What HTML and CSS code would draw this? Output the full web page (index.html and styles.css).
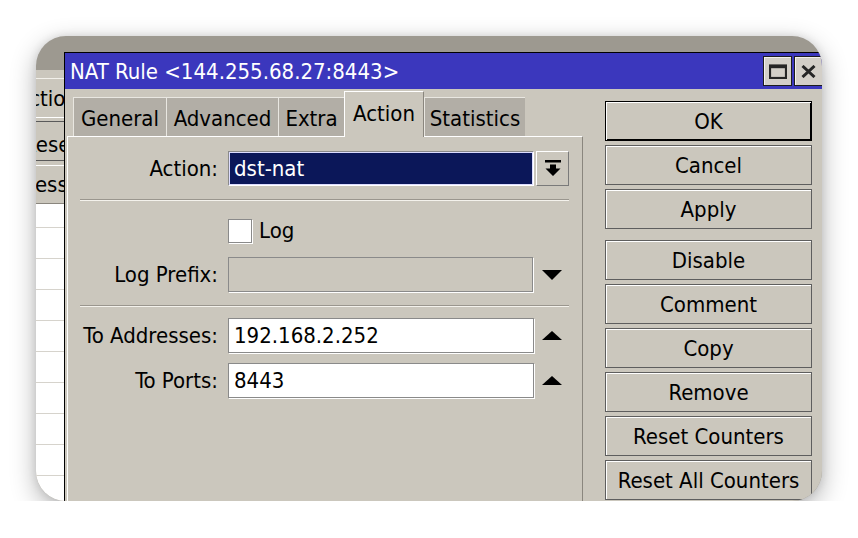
FILE: index.html
```html
<!DOCTYPE html>
<html>
<head>
<meta charset="utf-8">
<title>NAT Rule</title>
<link rel="stylesheet" href="styles.css">
</head>
<body>
<div class="stage">
  <div class="card">
    <div class="bgwin">
      <div class="bg-toolbar"></div>
      <div class="bg-row bg-row--tool"><span class="bg-text bg-text--action">Action</span></div>
      <div class="bg-row bg-row--btn"><span class="bg-text bg-text--reset">Reset</span></div>
      <div class="bg-row bg-row--head"><span class="bg-text bg-text--addr">Address</span></div>
      <div class="bg-list">
        <div class="bg-item"></div><div class="bg-item"></div><div class="bg-item"></div>
        <div class="bg-item"></div><div class="bg-item"></div><div class="bg-item"></div>
        <div class="bg-item"></div><div class="bg-item"></div><div class="bg-item"></div>
      </div>
    </div>

    <div class="win">
      <div class="titlebar">
        <span class="title">NAT Rule &lt;144.255.68.27:8443&gt;</span>
        <div class="tb-btns">
          <div class="tb-btn">
            <svg width="18" height="15" viewBox="0 0 18 15"><rect x="1" y="1.5" width="16" height="12.5" fill="none" stroke="#262626" stroke-width="2.2"/><rect x="1" y="1" width="16" height="3.2" fill="#262626"/></svg>
          </div>
          <div class="tb-btn">
            <svg width="15" height="13" viewBox="0 0 15 13"><path d="M1.5 1 L13.5 12 M13.5 1 L1.5 12" stroke="#262626" stroke-width="3" fill="none"/></svg>
          </div>
        </div>
      </div>
      <div class="win-body">
        <div class="main">
          <div class="tabs">
            <div class="tab tab--general">General</div>
            <div class="tab tab--advanced">Advanced</div>
            <div class="tab tab--extra">Extra</div>
            <div class="tab tab--action tab--active">Action</div>
            <div class="tab tab--stats">Statistics</div>
          </div>
          <div class="panel">
            <div class="row row--action">
              <span class="label">Action:</span>
              <div class="select">dst-nat</div>
              <div class="dd-btn">
                <svg width="16" height="17" viewBox="0 0 16 17"><rect x="0" y="0" width="16" height="2.5" fill="#000"/><path d="M5 4.5 H11 V8.5 H15.5 L8 16 L0.5 8.5 H5 Z" fill="#000"/></svg>
              </div>
            </div>
            <div class="sep"></div>
            <div class="row row--check">
              <span class="label"></span>
              <label class="check"><span class="box"></span><span class="check-text">Log</span></label>
            </div>
            <div class="row row--prefix">
              <span class="label">Log Prefix:</span>
              <div class="field field--disabled"></div>
              <div class="arrow">
                <svg width="20" height="10" viewBox="0 0 20 10"><path d="M0 0 H20 L10 10 Z" fill="#000"/></svg>
              </div>
            </div>
            <div class="sep"></div>
            <div class="row row--addr">
              <span class="label">To Addresses:</span>
              <div class="field">192.168.2.252</div>
              <div class="arrow">
                <svg width="20" height="10" viewBox="0 0 20 10"><path d="M0 9 H20 L10 0 Z" fill="#000"/></svg>
              </div>
            </div>
            <div class="row row--ports">
              <span class="label">To Ports:</span>
              <div class="field">8443</div>
              <div class="arrow">
                <svg width="20" height="10" viewBox="0 0 20 10"><path d="M0 9 H20 L10 0 Z" fill="#000"/></svg>
              </div>
            </div>
          </div>
        </div>
        <div class="side">
          <div class="btn btn--default">OK</div>
          <div class="btn">Cancel</div>
          <div class="btn">Apply</div>
          <div class="btn btn--gap">Disable</div>
          <div class="btn">Comment</div>
          <div class="btn">Copy</div>
          <div class="btn">Remove</div>
          <div class="btn">Reset Counters</div>
          <div class="btn">Reset All Counters</div>
        </div>
      </div>
    </div>
  </div>
</div>
</body>
</html>
```

FILE: styles.css
```css
* { box-sizing: border-box; }
html, body { margin: 0; padding: 0; background: #fff; }
body {
  font-family: "DejaVu Sans Condensed", "DejaVu Sans", "Liberation Sans", sans-serif;
  font-stretch: condensed;
  font-size: 22px;
  color: #000;
}
.stage { padding: 36px 0 0 36px; }
.card {
  position: relative;
  width: 786px;
  height: 465px;
  border-radius: 30px;
  overflow: hidden;
  background: #9d9990;
  box-shadow: 0 8px 26px rgba(0,0,0,0.30), 0 0 8px rgba(0,0,0,0.10);
}

/* background window (partially hidden list) */
.bgwin {
  position: absolute;
  left: -40px;
  top: 34px;
  width: 110px;
  bottom: 0;
  background: #cbc7bd;
}
.bg-toolbar { height: 9px; border-bottom: 1px solid #f2f0ea; }
.bg-row { position: relative; display: flex; align-items: center; white-space: nowrap; }
.bg-row--tool { height: 39px; border-bottom: 1px solid #fff; margin-bottom: 3px; }
.bg-row--btn { height: 40px; border-top: 1px solid #5a5a5a; border-bottom: 1px solid #5a5a5a; padding-top: 6px; }
.bg-row--head { height: 39px; margin-top: 4px; border-top: 1px solid #fff; border-bottom: 1px solid #8a867e; }
.bg-text { position: absolute; }
.bg-text--action { left: 20px; }
.bg-text--reset { left: 27px; }
.bg-text--addr { left: -7px; }
.bg-list { background: #fff; padding-top: 23px; height: 400px; }
.bg-item { height: 31px; border-top: 1px solid #d6d3cc; }

/* NAT window */
.win {
  position: absolute;
  left: 28px;
  top: 16px;
  width: 764px;
  height: 460px;
  border-left: 1px solid #000;
  border-top: 1px solid #000;
  background: #cbc7bd;
}
.titlebar {
  height: 36px;
  background: #3b37bd;
  display: flex;
  align-items: center;
  justify-content: space-between;
  padding: 0 5px 0 5px;
}
.title { color: #fff; white-space: nowrap; font-size: 22px; }
.tb-btns { display: flex; gap: 2px; }
.tb-btn {
  width: 29px;
  height: 30px;
  background: #d3cfc8;
  border: 1px solid #1c1c1c;
  box-shadow: inset 1px 1px 0 #f4f2ee;
  display: flex;
  align-items: center;
  justify-content: center;
}

.win-body {
  display: flex;
  padding: 2px 0 0 2px;
}
.main { width: 516px; display: flex; flex-direction: column; }
.tabs {
  display: flex;
  align-items: flex-end;
  height: 45px;
  margin-left: 6px;
  position: relative;
  z-index: 2;
}
.tab {
  height: 39px;
  background: #b2aea6;
  border-left: 1px solid #e9e7e1;
  border-top: 1px solid #e9e7e1;
  display: flex;
  align-items: center;
  justify-content: center;
  padding-top: 3px;
  white-space: nowrap;
}
.tab--general { width: 93px; }
.tab--advanced { width: 112px; }
.tab--extra { width: 66px; }
.tab--action { width: 80px; }
.tab--stats { width: 101px; }
.tab--active {
  height: 46px;
  margin-bottom: -1px;
  background: #cbc7bd;
  border-left: 1px solid #fff;
  border-top: 1px solid #fff;
  border-right: 1px solid #8a867e;
  padding-top: 0;
  padding-bottom: 2px;
}
.panel {
  height: 400px;
  border-top: 1px solid #fff;
  border-left: 1px solid #fff;
  border-right: 1px solid #8a867e;
  padding-top: 14px;
  display: flex;
  flex-direction: column;
}
.row {
  display: grid;
  grid-template-columns: 160px 306px 35px;
  align-items: center;
  height: 35px;
}
.label { text-align: right; padding-right: 10px; white-space: nowrap; }
.select {
  height: 35px;
  background: #0b1759;
  color: #fff;
  border: 1px solid;
  border-color: #8a8a8a #fff #fff #8a8a8a;
  box-shadow: inset 0 0 0 1px #dcdcff;
  padding-left: 5px;
  display: flex;
  align-items: center;
}
.dd-btn {
  justify-self: end;
  width: 33px;
  height: 35px;
  border: 1px solid;
  border-color: #fff #7a7a7a #7a7a7a #fff;
  display: flex;
  align-items: center;
  justify-content: center;
}
.sep {
  margin: 13px 0 0 12px;
  width: 489px;
  height: 2px;
  border-top: 1px solid #9a968e;
  border-bottom: 1px solid #f4f2ec;
}
.row--check { margin-top: 17px; height: 24px; }
.check { display: flex; align-items: center; gap: 7px; }
.box {
  width: 24px;
  height: 24px;
  background: #fff;
  border: 1px solid #8a8a8a;
  box-shadow: 1px 1px 0 #fff;
}
.row--prefix { margin-top: 15px; }
.row--addr { margin-top: 11px; }
.row--ports { margin-top: 10px; }
.field {
  height: 35px;
  background: #fff;
  border: 1px solid #8a8a8a;
  box-shadow: 1px 1px 0 #fff;
  padding-left: 5px;
  display: flex;
  align-items: center;
}
.field--disabled { background: #cbc7bd; width: 305px; }
.arrow {
  justify-self: end;
  width: 32px;
  display: flex;
  align-items: center;
  padding-left: 5px;
}

.side {
  margin: 10px 0 0 22px;
  width: 207px;
  display: flex;
  flex-direction: column;
  gap: 4px;
}
.btn {
  height: 40px;
  border: 1px solid #5e5e5e;
  box-shadow: inset 1px 1px 0 #fff;
  display: flex;
  align-items: center;
  justify-content: center;
  white-space: nowrap;
}
.btn--default {
  border: 1px solid #000;
  box-shadow: inset 1px 1px 0 #fff, inset -1px -1px 0 #000;
}
.btn--gap { margin-top: 7px; }
```
